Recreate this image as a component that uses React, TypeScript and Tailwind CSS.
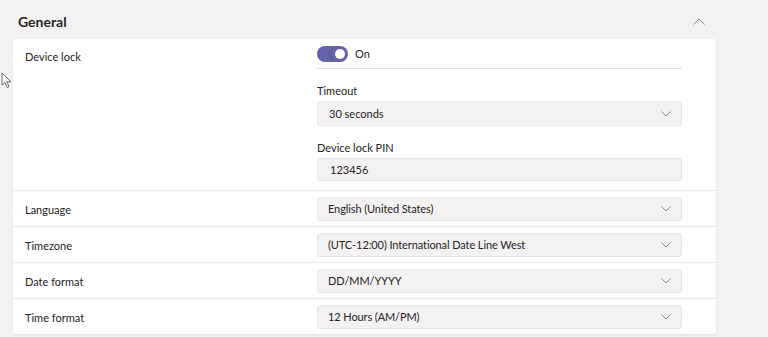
import { ReactNode } from "react"

const FONT = "font-['Segoe_UI','Lato',sans-serif]"

function ChevronDown() {
  return (
    <svg width="10" height="6" viewBox="0 0 10 6" className="shrink-0">
      <path d="M0.5 0.5 L5 5 L9.5 0.5" fill="none" stroke="#8a8886" strokeWidth="1" />
    </svg>
  )
}

function Select({ value }: { value: string }) {
  return (
    <div className="flex h-[24px] w-[365px] items-center justify-between rounded-[3px] border border-[#e8e6e4] bg-[#f3f2f1] pl-[10px] pr-[10px] text-[11px] leading-[16px] tracking-[-0.1px] text-[#252423]">
      <span>{value}</span>
      <ChevronDown />
    </div>
  )
}

function Row({ label, children, last }: { label: string; children: ReactNode; last?: boolean }) {
  return (
    <div
      className={
        "flex items-center pt-[6px] pb-[5px] " + (last ? "" : "border-b border-[#edebe9]")
      }
    >
      <div className="w-[304px] pl-[12px] pt-[1px] text-[11px] leading-[16px] text-[#252423]">{label}</div>
      {children}
    </div>
  )
}

export default function App() {
  return (
    <div className={"relative h-[337px] w-[768px] overflow-hidden bg-[#f3f2f1] pl-[13px] pr-[52px] " + FONT}>
      {/* cursor */}
      <svg className="absolute left-[1px] top-[72px]" width="12" height="17" viewBox="0 0 12 17">
        <path
          d="M1 1 L1 13 L4 10.5 L6.2 15.5 L8 14.7 L5.9 9.8 L10 9.8 Z"
          fill="#fff"
          stroke="#6b6a69"
          strokeWidth="1"
          strokeLinejoin="round"
        />
      </svg>

      <div className="flex h-[39px] items-center justify-between pl-[5px] pr-[11px] pt-[4px]">
        <span className="text-[14px] font-bold leading-[18px] text-[#252423]">General</span>
        <svg width="12" height="7" viewBox="0 0 12 7">
          <path d="M0.5 6.5 L6 1 L11.5 6.5" fill="none" stroke="#8a8886" strokeWidth="1" />
        </svg>
      </div>

      <div className="rounded-[2px] bg-white shadow-[0_1px_2px_rgba(0,0,0,0.08)]">
        <div className="flex border-b border-[#edebe9] pb-[9px]">
          <div className="w-[304px] pl-[12px] pt-[10px] text-[11px] leading-[16px] text-[#252423]">
            Device lock
          </div>
          <div className="w-[365px] pt-[7px]">
            <div className="flex h-[23px] items-start gap-[7px] border-b border-[#e1dfdd]">
              <div className="flex h-[16px] w-[31px] items-center justify-end rounded-full bg-[#6264a7] pr-[3px]">
                <div className="h-[10px] w-[10px] rounded-full bg-white" />
              </div>
              <span className="text-[11px] leading-[16px] text-[#252423]">On</span>
            </div>
            <div className="mt-[14px] text-[11px] leading-[16px] text-[#252423]">Timeout</div>
            <div className="mt-[2px] flex h-[25px] w-[365px] items-center justify-between rounded-[3px] border border-[#e8e6e4] bg-[#f3f2f1] pl-[11px] pr-[10px] text-[11px] leading-[16px] text-[#252423]">
              <span>30 seconds</span>
              <ChevronDown />
            </div>
            <div className="mt-[14px] text-[11px] leading-[16px] text-[#252423]">Device lock PIN</div>
            <div className="mt-[2px] flex h-[23px] w-[365px] items-center rounded-[3px] border border-[#e8e6e4] bg-[#f3f2f1] pl-[12px] text-[11px] leading-[16px] text-[#252423]">
              123456
            </div>
          </div>
        </div>

        <Row label="Language">
          <Select value="English (United States)" />
        </Row>
        <Row label="Timezone">
          <Select value="(UTC-12:00) International Date Line West" />
        </Row>
        <Row label="Date format">
          <Select value="DD/MM/YYYY" />
        </Row>
        <Row label="Time format" last>
          <Select value="12 Hours (AM/PM)" />
        </Row>
      </div>
    </div>
  )
}
